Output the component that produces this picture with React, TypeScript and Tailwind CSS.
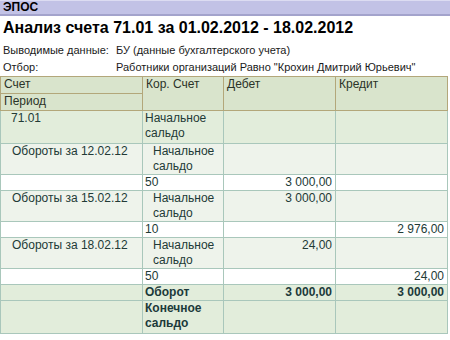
import React from "react";

type Row = {
  kind: "group" | "sub" | "line" | "total";
  c1?: string;
  c2?: string;
  debit?: string;
  credit?: string;
  tall?: boolean;
};

const rows: Row[] = [
  { kind: "group", c1: "71.01", c2: "Начальное сальдо", tall: true },
  { kind: "sub", c1: "Обороты за 12.02.12", c2: "Начальное сальдо" },
  { kind: "line", c2: "50", debit: "3 000,00" },
  { kind: "sub", c1: "Обороты за 15.02.12", c2: "Начальное сальдо", debit: "3 000,00" },
  { kind: "line", c2: "10", credit: "2 976,00" },
  { kind: "sub", c1: "Обороты за 18.02.12", c2: "Начальное сальдо", debit: "24,00" },
  { kind: "line", c2: "50", credit: "24,00" },
  { kind: "total", c2: "Оборот", debit: "3 000,00", credit: "3 000,00" },
  { kind: "total", c2: "Конечное сальдо", tall: true },
];

const rowBg: Record<Row["kind"], string> = {
  group: "bg-[#e2eddb]",
  sub: "bg-[#eef3eb]",
  line: "bg-white",
  total: "bg-[#e2eddb]",
};

export default function App() {
  return (
    <div className="w-[450px] h-[340px] bg-white overflow-hidden text-black" style={{ fontFamily: '"Liberation Sans", Arial, sans-serif' }}>
      <div className="h-[16px] bg-[#c2c2e6] border-t border-[#dcdcf2] border-b-2 border-b-[#a3a3cc] px-[3px] text-[12px] font-bold leading-[13px]">
        ЭПОС
      </div>
      <h1 className="px-[3px] pt-[2px] text-[16px] font-bold leading-[20px]">
        Анализ счета 71.01 за 01.02.2012 - 18.02.2012
      </h1>
      <div className="mt-[3px] flex text-[11px] leading-[18px] text-[#1a1a1a]">
        <div className="w-[116px] pl-[3px]">Выводимые данные:</div>
        <div>БУ (данные бухгалтерского учета)</div>
      </div>
      <div className="flex text-[11px] leading-[17px] text-[#1a1a1a]">
        <div className="w-[116px] pl-[3px]">Отбор:</div>
        <div>Работники организаций Равно "Крохин Дмитрий Юрьевич"</div>
      </div>
      <table className="w-[447px] border-collapse table-fixed text-[12px] leading-[15px]">
        <colgroup>
          <col className="w-[142px]" />
          <col className="w-[81px]" />
          <col className="w-[112px]" />
          <col className="w-[112px]" />
        </colgroup>
        <thead className="bg-[#d9e4cc] text-[#2b3328]">
          <tr className="h-[17px]">
            <td className="border border-[#b3a77a] px-[3px] align-top">Счет</td>
            <td rowSpan={2} className="border border-[#b3a77a] px-[3px] align-top">Кор. Счет</td>
            <td rowSpan={2} className="border border-[#b3a77a] px-[3px] align-top">Дебет</td>
            <td rowSpan={2} className="border border-[#b3a77a] px-[3px] align-top">Кредит</td>
          </tr>
          <tr className="h-[17px]">
            <td className="border border-[#b3a77a] px-[3px] align-top">Период</td>
          </tr>
        </thead>
        <tbody className="text-[#223a36]">
          {rows.map((r, i) => {
            const bold = r.kind === "total" ? "font-bold text-[#1c3a3a]" : "";
            return (
              <tr key={i} className={`${rowBg[r.kind]} ${r.tall ? "h-[33px]" : ""}`}>
                <td className={`border border-[#a9c7bb] align-top ${r.kind === "group" ? "pl-[10px]" : "pl-[11px]"}`}>
                  {r.c1}
                </td>
                <td className={`border border-[#a9c7bb] align-top pr-[2px] ${r.kind === "sub" ? "pl-[10px]" : "pl-[2px]"} ${bold}`}>
                  {r.c2}
                </td>
                <td className={`border border-[#a9c7bb] align-top pr-[3px] text-right ${bold}`}>{r.debit}</td>
                <td className={`border border-[#a9c7bb] align-top pr-[3px] text-right ${bold}`}>{r.credit}</td>
              </tr>
            );
          })}
        </tbody>
      </table>
    </div>
  );
}
